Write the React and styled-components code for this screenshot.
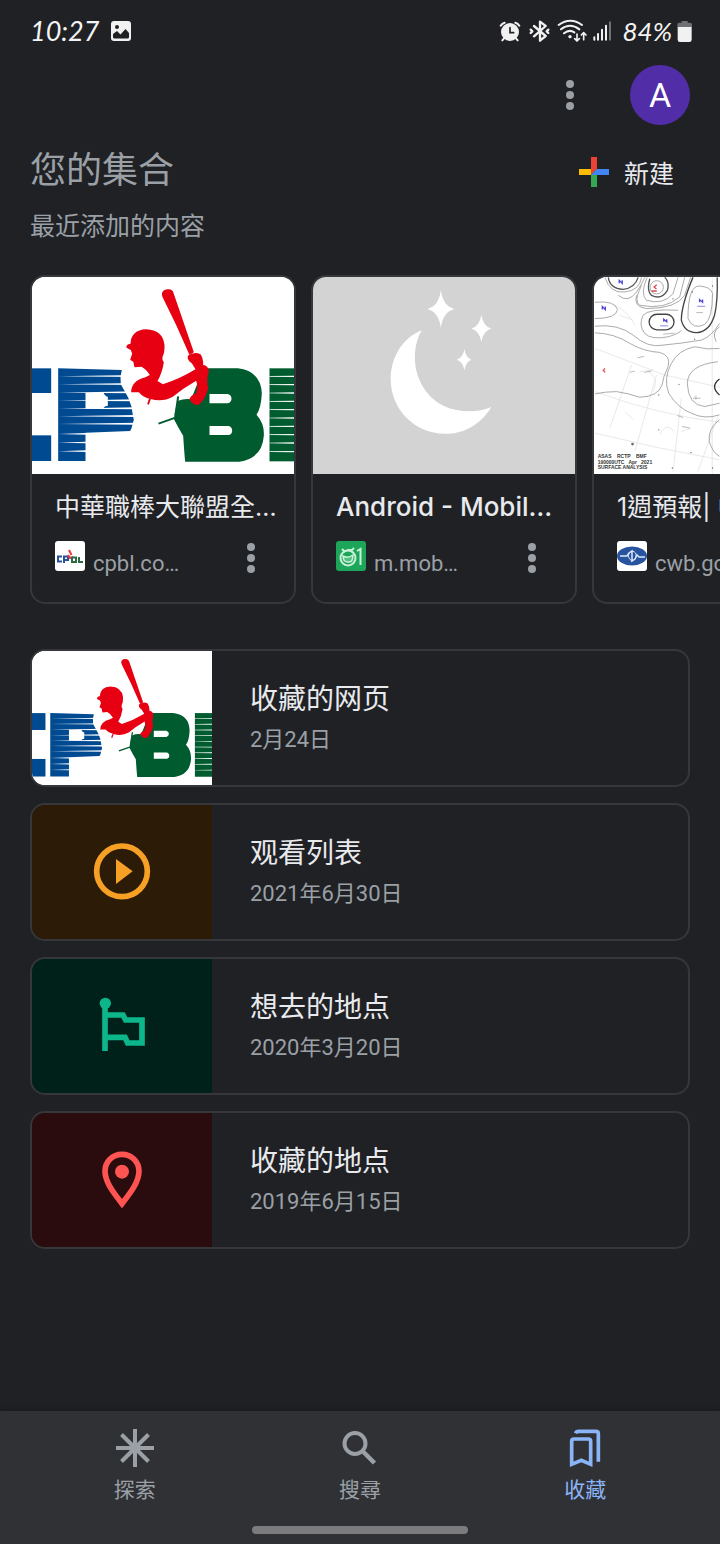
import React from "react";
import styled, { createGlobalStyle } from "styled-components";

const colors = {
  page: "#202125",
  nav: "#303135",
  line: "#35373a",
  muted: "#9aa0a6",
  text: "#e8eaed",
  accent: "#8ab4f8",
};

const GlobalStyle = createGlobalStyle`
  *, *::before, *::after { box-sizing: border-box; }
  body {
    margin: 0;
    background: ${colors.page};
    color: ${colors.text};
    font-family: Roboto, "Noto Sans CJK SC", sans-serif;
  }
  button {
    padding: 0;
    border: 0;
    background: none;
    color: inherit;
    font: inherit;
    cursor: pointer;
  }
  svg { display: block; flex: none; overflow: hidden; }
  h1, h2, h3, p, ul { margin: 0; padding: 0; font-weight: 400; }
  ul { list-style: none; }
`;

const Page = styled.div`
  min-height: 100vh;
  display: flex;
  flex-direction: column;
`;

const StatusBar = styled.div`
  display: flex;
  align-items: center;
  justify-content: space-between;
  height: 62px;
  padding: 0 27px 0 30px;
`;

const StatusGroup = styled.div`
  display: flex;
  align-items: center;
  gap: ${(p) => p.$gap}px;
`;

const StatusText = styled.span`
  font-family: Lato, sans-serif;
  font-style: italic;
  font-size: ${(p) => p.$size}px;
  line-height: 32px;
  color: #f4f4f4;
`;

const TopBar = styled.header`
  display: flex;
  align-items: center;
  justify-content: flex-end;
  gap: 40px;
  padding: 3px 30px 0;
`;

const KebabButton = styled.button`
  display: flex;
  justify-content: center;
  align-items: center;
  width: 40px;
  height: 34px;
  color: ${colors.muted};
`;

const Avatar = styled.button`
  width: 60px;
  height: 60px;
  border-radius: 50%;
  background: #512da8;
  color: #fff;
  font-size: 34px;
  line-height: 60px;
`;

const Main = styled.main`
  flex: 1;
`;

const SectionHead = styled.div`
  display: flex;
  align-items: flex-start;
  justify-content: space-between;
  padding: 20px 46px 0 30px;
`;

const Heading = styled.h1`
  font-size: 36px;
  line-height: 52px;
  color: ${colors.muted};
`;

const Subheading = styled.h2`
  padding: 10px 30px 0;
  font-size: 25px;
  line-height: 36px;
  color: ${colors.muted};
`;

const NewButton = styled.button`
  display: flex;
  align-items: center;
  gap: 15px;
  height: 54px;
  font-size: 25px;
`;

const Carousel = styled.ul`
  display: flex;
  gap: 15px;
  margin-top: 30px;
  padding: 0 30px;
  overflow-x: auto;
  scrollbar-width: none;
`;

const Card = styled.li`
  flex: none;
  width: 266px;
  border: 2px solid ${colors.line};
  border-radius: 15px;
  overflow: hidden;
`;

const CardImage = styled.div`
  height: 197px;
  background: ${(p) => p.$bg};
`;

const CardBody = styled.div`
  padding: 15px 23px 23px;
`;

const CardTitle = styled.h3`
  font-family: Inter, "Noto Sans CJK TC", sans-serif;
  font-size: ${(p) => (p.$latin ? 26 : 25)}px;
  font-weight: ${(p) => (p.$latin ? 500 : 400)};
  line-height: 36px;
  white-space: nowrap;
`;

const CardSource = styled.div`
  display: flex;
  align-items: flex-start;
  margin-top: 16px;
`;

const SourceName = styled.span`
  flex: 1;
  padding: 8px 0 0 8px;
  font-size: 22px;
  line-height: 30px;
  white-space: nowrap;
  color: ${colors.muted};
`;

const CollectionList = styled.ul`
  display: flex;
  flex-direction: column;
  gap: 16px;
  padding: 45px 30px 30px;
`;

const CollectionButton = styled.button`
  display: flex;
  width: 100%;
  height: 138px;
  border: 2px solid ${colors.line};
  border-radius: 15px;
  overflow: hidden;
  text-align: left;
`;

const Tile = styled.span`
  display: flex;
  align-items: center;
  justify-content: center;
  width: 180px;
  height: 100%;
  background: ${(p) => p.$bg};
`;

const CollectionText = styled.span`
  display: flex;
  flex-direction: column;
  padding: 29px 0 0 38px;
`;

const CollectionName = styled.span`
  font-size: 28px;
  line-height: 40px;
`;

const CollectionDate = styled.span`
  font-size: 22px;
  line-height: 40px;
  color: ${colors.muted};
`;

const BottomNav = styled.nav`
  padding: 17px 22px 10px;
  background: ${colors.nav};
  box-shadow: 0 -2px 8px rgba(0, 0, 0, 0.2);
`;

const NavItems = styled.div`
  display: flex;
`;

const NavItem = styled.button`
  flex: 1;
  display: flex;
  flex-direction: column;
  align-items: center;
  gap: 8px;
  font-family: Roboto, "Noto Sans CJK TC", sans-serif;
  font-size: 21px;
  line-height: 28px;
  color: ${(p) => (p.$active ? colors.accent : colors.muted)};
`;

const HomeIndicator = styled.div`
  width: 32%;
  height: 8px;
  margin: 22px auto 0;
  border-radius: 4px;
  background: #7c7c7f;
`;

const PhotoIcon = () => (
  <svg width="20" height="20" viewBox="0 0 20 20">
    <rect width="20" height="20" rx="3" fill="#f1f1f1" />
    <circle cx="6" cy="6" r="2" fill={colors.page} />
    <path d="M2 13 L6 10 L9.5 13.5 L14.5 8 L18 12 V16 Q18 17.5 16.5 17.5 H3.5 Q2 17.5 2 16Z" fill={colors.page} />
  </svg>
);

const AlarmIcon = () => (
  <svg width="23" height="22" viewBox="60 60 69 66" fill="none" stroke="#f1f1f1" strokeWidth="6" strokeLinecap="round">
    <circle cx="93" cy="96" r="27" fill="#f1f1f1" stroke="none" />
    <path d="M65 77 Q69 70 77 68 M109 68 Q117 70 121 77 M75 115 L70 121 M111 115 L116 121" />
    <path d="M93 83 V98 H104" stroke={colors.page} strokeWidth="5" />
  </svg>
);

const BluetoothIcon = () => (
  <svg width="22" height="22" viewBox="147 60 66 66" fill="none" stroke="#f1f1f1" strokeWidth="7" strokeLinecap="round" strokeLinejoin="round">
    <path d="M165 78 L200 108 L183 122 V65 L200 78 L165 109" />
    <path d="M155 89 L160 94 L155 99 M208 89 L203 94 L208 99" />
  </svg>
);

const WifiIcon = () => (
  <svg width="31" height="24" viewBox="231 57 93 72" fill="none" stroke="#f1f1f1" strokeWidth="6" strokeLinecap="round" strokeLinejoin="round">
    <path d="M239 75 Q274 50 309 75 M246 88 Q273 67 301 88 M255 100 Q271 87 286 97" />
    <circle cx="273" cy="110" r="5" fill="#f1f1f1" stroke="none" />
    <path d="M294 102 V122 M287 116 L294 123 L301 116 M314 119 V99 M307 105 L314 98 L321 105" strokeWidth="5" />
  </svg>
);

const SignalIcon = () => (
  <svg width="19" height="22" viewBox="342 60 57 66" fill="none" stroke="#f1f1f1" strokeWidth="6" strokeLinecap="round">
    <path d="M346 112 V119 M357 102 V119 M369 89 V119 M381 77 V119" />
    <path d="M393 67 V119" stroke="#707174" />
  </svg>
);

const BatteryIcon = () => (
  <svg width="16" height="22" viewBox="591 60 48 66">
    <path d="M605 63 H623 V68 H631 Q636 68 636 73 V82 H592 V73 Q592 68 597 68 H605Z" fill="#6f7073" />
    <path d="M593 81 H635 V119 Q635 126 628 126 H600 Q593 126 593 119Z" fill="#f1f1f1" />
  </svg>
);

const KebabIcon = () => (
  <svg width="8" height="32" viewBox="0 0 8 32" fill="currentColor">
    <circle cx="4" cy="5" r="4" />
    <circle cx="4" cy="16" r="4" />
    <circle cx="4" cy="27" r="4" />
  </svg>
);

const PlusIcon = () => (
  <svg width="30" height="30" viewBox="0 0 30 30">
    <path d="M12 0 H18 V12 L12 18Z" fill="#ea4335" />
    <path d="M0 12 H12 V18 H0Z" fill="#fbbc04" />
    <path d="M12 18 L18 12 V30 H12Z" fill="#34a853" />
    <path d="M18 12 H30 V18 H12Z" fill="#4285f4" />
  </svg>
);

const pStripes = [334, 358, 383, 407, 431, 454, 477];
const footStripes = [507, 533, 559];
const lStripes = [334, 359, 384, 409, 434, 459, 484, 509, 534, 560];

const LeagueLogo = () => (
  <svg width="100%" height="100%" viewBox="36 36 789 591" preserveAspectRatio="xMidYMid slice">
    <rect x="30" y="30" width="800" height="600" fill="#fff" />
    <g fill="#004a91">
      <rect x="30" y="310" width="65" height="74" />
      <rect x="30" y="511" width="65" height="77" />
      <path d="M116 310 L307 315 L303 336 L304 358 L314 376 L327 400 L336 425 L340 450 L343 464 L336 490 L332 498 L198 503 V588 H116Z" />
    </g>
    <path d="M198 383 H252 Q257 394 265 395 V422 Q255 422 251 431 H198Z" fill="#fff" />
    <g fill="#fff">
      {pStripes.map((y) => (
        <path key={y} d={`M116 ${y} L350 ${y - 4} V${y + 2}Z`} />
      ))}
      {footStripes.map((y) => (
        <path key={y} d={`M116 ${y} L200 ${y - 3} V${y + 2}Z`} />
      ))}
    </g>
    <path
      d="M476 407 Q495 400 515 403 L552 310 H655 Q724 318 727 385 Q725 430 711 449 Q735 475 733 512 Q728 580 660 590 H497 Q494 560 491 512 Q475 486 463 462 Q468 425 476 407Z"
      fill="#005c2e"
    />
    <path d="M417 476 L468 458 M476 394 L468 450" stroke="#005c2e" strokeWidth="6" />
    <g fill="#fff">
      <path d="M570 387 H625 Q636 391 636 401 Q636 411 625 415 H570Z" />
      <path d="M570 483 H628 Q638 487 638 497 Q638 507 628 510 H570Z" />
    </g>
    <rect x="750" y="310" width="80" height="279" fill="#005c2e" />
    <g fill="#fff">
      {lStripes.map((y) => (
        <path key={y} d={`M750 ${y - 1} L830 ${y - 2} V${y + 2} L750 ${y + 1}Z`} />
      ))}
    </g>
    <g fill="#e60012">
      <path d="M427 88 Q428 74 444 73 Q459 71 462 84 L484 148 L523 262 L510 270 L470 180 L429 96Z" />
      <path d="M333 236 Q335 195 380 193 Q430 195 435 240 Q436 262 429 276 Q427 285 433 292 Q428 325 414 348 L430 358 Q480 342 528 313 L517 295 Q502 285 505 272 Q525 258 543 268 Q552 282 551 300 Q566 302 568 318 Q560 345 566 370 Q558 403 537 420 Q517 420 510 402 Q515 390 530 385 Q536 365 530 347 Q490 370 460 395 Q430 412 393 402 Q370 397 358 382 L335 382 Q335 348 378 337 L391 330 Q380 312 366 305 L345 307 Q342 298 342 291 L332 284 L338 266 L334 255 L321 248 Q319 238 333 236Z" />
      <path d="M389 400 L394 403 L388 419 L383 417Z" />
    </g>
  </svg>
);

const MoonPicture = () => (
  <svg width="100%" height="100%" viewBox="24 36 789 591" fill="#fff">
    <path d="M352 195 C295 216 258 276 258 343 C258 434 331 507 421 507 C480 507 530 478 561 426 C525 443 465 445 418 423 C360 395 327 331 331 265 C333 237 340 213 352 195Z" />
    <path d="M409 74 Q415 123 450 131 Q415 140 409 188 Q403 140 368 131 Q403 123 409 74Z" />
    <path d="M531 149 Q537 184 561 190 Q537 197 531 230 Q525 197 501 190 Q525 184 531 149Z" />
    <path d="M480 252 Q484 278 501 284 Q484 290 480 316 Q476 290 457 284 Q476 278 480 252Z" />
  </svg>
);

const MapText = styled.text`
  font-family: "Liberation Sans", sans-serif;
  font-size: 15px;
  font-weight: 700;
  fill: #333;
  white-space: pre;
`;

const WeatherMap = () => (
  <svg width="100%" height="100%" viewBox="27 36 789 591" fill="none" stroke="#999" strokeWidth="2.5">
    <rect x="20" y="30" width="800" height="600" fill="#fff" stroke="none" />
    <g stroke="#dedede" strokeWidth="2">
      <path d="M30 380 Q220 450 405 472 M30 505 Q220 552 405 585 M140 300 L75 490 M215 330 L150 560 M290 400 L265 620 M30 250 L240 330 L420 370 M383 40 V627 M400 455 L340 620" />
      <path d="M90 120 Q130 140 150 180 M105 150 L145 165 M190 320 Q225 340 205 380 M225 510 Q240 470 270 500 M120 440 L145 465 M165 320 L205 315 M290 500 L320 490" />
    </g>
    <path d="M60 36 Q75 85 120 80 Q165 75 170 36 M100 90 Q130 115 155 80 Q170 60 180 36" />
    <path d="M70 36 Q75 70 115 72 Q150 68 160 36" stroke="#555" strokeWidth="4" />
    <path d="M30 111 Q90 105 98 133 Q94 160 30 160" />
    <path d="M195 40 Q185 75 200 90 Q230 105 248 75 Q255 50 240 36" stroke="#555" strokeWidth="4" />
    <path d="M187 36 Q165 85 185 105 Q235 120 265 85 L280 36 M170 60 Q145 110 165 120 Q240 135 285 95 L300 36 M155 90 Q145 125 185 130 Q275 130 300 90 L318 36" />
    <circle cx="216" cy="66" r="20" />
    <rect x="193" y="147" width="75" height="47" rx="24" stroke="#444" strokeWidth="4" />
    <path d="M280 135 Q190 130 175 150 Q160 180 180 205 Q200 225 250 215 Q285 205 290 195" />
    <path d="M325 36 Q290 120 290 165 Q300 205 340 202 Q375 198 390 150 Q400 110 398 36" stroke="#444" strokeWidth="4" />
    <path d="M310 160 Q310 60 345 62 Q380 65 384 85 Q384 160 360 178 Q325 195 310 160" />
    <path d="M30 183 Q100 175 145 210 Q190 250 235 240 Q290 235 350 225 Q380 215 405 175 M30 203 Q90 205 135 235 Q180 260 225 262 Q260 272 250 305 Q235 335 232 360 Q220 395 165 397 Q130 385 95 380 Q60 380 30 387" />
    <path d="M330 245 Q280 255 260 295 Q235 340 252 385 Q280 430 320 445 Q360 465 405 450 M330 245 Q370 255 405 250 M400 290 Q310 300 308 355 Q310 420 360 425 L405 415 M405 185 Q380 200 395 230 M405 465 Q370 490 374 530 Q385 565 405 575" />
    <path d="M405 342 Q375 365 405 390" stroke="#333" strokeWidth="4" />
    <g stroke="#5248d6" strokeWidth="4">
      <path d="M103 54 V45 L112 54 V45 M52 133 V124 L61 133 V124 M237 170 V162 L246 170 V162 M345 111 V103 L354 111 V103" />
      <path d="M226 182 H250 M338 123 H362" strokeWidth="2" />
    </g>
    <path d="M216 58 L208 65 L215 71 M60 310 L55 316 L61 322 M200 77 H216" stroke="#dc4a50" strokeWidth="4" />
    <g fill="#666" stroke="none">
      <circle cx="265" cy="101" r="2" />
      <circle cx="384" cy="62" r="2" />
      <circle cx="323" cy="80" r="2" />
      <circle cx="143" cy="538" r="4" />
      <circle cx="222" cy="495" r="2" />
      <circle cx="319" cy="564" r="2" />
      <circle cx="222" cy="390" r="2" />
      <circle cx="283" cy="358" r="2" />
      <circle cx="330" cy="222" r="2" />
      <circle cx="263" cy="610" r="2" />
      <circle cx="384" cy="610" r="2" />
    </g>
    <g stroke="#999" strokeWidth="2">
      <path d="M158 278 L178 274 M135 322 L150 318 M178 322 L200 318 M235 207 L270 204 M278 452 L295 458 M292 485 L316 490 M325 400 H348 M334 392 V404 M335 142 H355" />
    </g>
    <g stroke="none">
      <MapText x="38" y="581">ASAS    RCTP    BMF</MapText>
      <MapText x="38" y="597">190000UTC   Apr   2021</MapText>
      <MapText x="38" y="613">SURFACE ANALYSIS</MapText>
    </g>
  </svg>
);

const LeagueFavicon = () => (
  <svg width="30" height="30" viewBox="0 0 30 30" fill="none" strokeWidth="2">
    <rect width="30" height="30" rx="3" fill="#fff" />
    <path d="M7 15.500 H3 V20.500 H7 M9 22 V15.500 H13 V19 H9" stroke="#27539b" />
    <path d="M14 9 L16.500 14 M13 14 L15 17 L18 16" stroke="#e5383f" />
    <path d="M17 16 V21 H21 V16.500 H17 M24 16 V21 H28" stroke="#2a6b45" />
  </svg>
);

const ForumFavicon = () => (
  <svg width="30" height="30" viewBox="0 0 30 30" fill="none" stroke="#c9f0d6" strokeWidth="2">
    <rect width="30" height="30" rx="3" fill="#1da65a" stroke="none" />
    <circle cx="12" cy="17" r="7.500" />
    <path d="M7 15 Q12 18 17 14 Q17 22 12 21 Q7 21 7 15Z" fill="#4fbf80" strokeWidth="1.500" />
    <path d="M6 8 L9 11 M11 9 H16 L18 7 M21 10 L24.500 8 V24" />
  </svg>
);

const WeatherFavicon = () => (
  <svg width="30" height="30" viewBox="0 0 30 30">
    <rect width="30" height="30" rx="3" fill="#fff" />
    <ellipse cx="15" cy="15" rx="15" ry="9.500" fill="#28549f" />
    <path d="M3 15 H10 L12 12 L15 10 V20 L18 18 L20 14 L22 16 H28" fill="none" stroke="#dce8ff" strokeWidth="1.500" />
    <path d="M12 12 Q10 17 15 20 M15 10 Q20 11 19 16" fill="none" stroke="#dce8ff" />
  </svg>
);

const PlayIcon = () => (
  <svg width="60" height="60" viewBox="216 606 180 180">
    <circle cx="306" cy="694" r="76" fill="none" stroke="#f6a025" strokeWidth="17" />
    <path d="M288 657 L338 694 L288 732Z" fill="#f6a025" />
  </svg>
);

const FlagIcon = () => (
  <svg width="60" height="60" viewBox="216 135 180 180" fill="none" stroke="#0cb58a" strokeWidth="17">
    <circle cx="256" cy="157" r="17" fill="#0cb58a" stroke="none" />
    <path d="M255 157 V300 M255 192 H309 L317 207 H366 V276 H323 L315 259 H255" />
  </svg>
);

const PinIcon = () => (
  <svg width="60" height="60" viewBox="216 597 180 180">
    <path
      d="M306 610 C277 610 255 632 255 661 C255 696 287 733 306 758 C325 733 357 696 357 661 C357 632 335 610 306 610Z"
      fill="none"
      stroke="#ff5452"
      strokeWidth="17"
    />
    <circle cx="306" cy="662" r="21" fill="#ff5452" />
  </svg>
);

const ExploreIcon = () => (
  <svg width="40" height="40" viewBox="0 0 40 40" stroke="currentColor" strokeWidth="4">
    <path d="M20 1 V39 M1 20 H39 M6.500 6.500 L33.500 33.500 M33.500 6.500 L6.500 33.500" />
  </svg>
);

const SearchIcon = () => (
  <svg width="40" height="40" viewBox="0 0 40 40" fill="none" stroke="currentColor" strokeWidth="4">
    <circle cx="15" cy="15.500" r="10.500" />
    <path d="M22 22.500 L34.500 35" strokeWidth="4.500" />
  </svg>
);

const BookmarksIcon = () => (
  <svg width="40" height="40" viewBox="135 84 120 120" fill="none" stroke="currentColor" strokeWidth="11">
    <path d="M155 193 V124 Q155 117 162 117 H205 Q212 117 212 124 V193 L184 181Z" />
    <path d="M167 100 Q169 94 176 94 H228 Q235 94 235 101 V185" />
  </svg>
);

const recentItems = [
  { title: "中華職棒大聯盟全…", source: "cpbl.co…", bg: "#fff", Picture: LeagueLogo, Favicon: LeagueFavicon },
  { title: "Android - Mobil…", latin: true, source: "m.mob…", bg: "#d3d3d3", Picture: MoonPicture, Favicon: ForumFavicon },
  { title: "1週預報| 中…", source: "cwb.go…", bg: "#fff", Picture: WeatherMap, Favicon: WeatherFavicon },
];

const collections = [
  { name: "收藏的网页", date: "2月24日", bg: "#fff", Icon: LeagueLogo },
  { name: "观看列表", date: "2021年6月30日", bg: "#2c1b06", Icon: PlayIcon },
  { name: "想去的地点", date: "2020年3月20日", bg: "#002119", Icon: FlagIcon },
  { name: "收藏的地点", date: "2019年6月15日", bg: "#2a0c0e", Icon: PinIcon },
];

const navItems = [
  { label: "探索", Icon: ExploreIcon },
  { label: "搜尋", Icon: SearchIcon },
  { label: "收藏", Icon: BookmarksIcon, active: true },
];

export default function App() {
  return (
    <Page>
      <GlobalStyle />
      <StatusBar>
        <StatusGroup $gap={12}>
          <StatusText $size={27}>10:27</StatusText>
          <PhotoIcon />
        </StatusGroup>
        <StatusGroup $gap={10}>
          <StatusGroup $gap={6}>
            <AlarmIcon />
            <BluetoothIcon />
            <WifiIcon />
            <SignalIcon />
          </StatusGroup>
          <StatusGroup $gap={5}>
            <StatusText $size={26}>84%</StatusText>
            <BatteryIcon />
          </StatusGroup>
        </StatusGroup>
      </StatusBar>
      <TopBar>
        <KebabButton aria-label="更多">
          <KebabIcon />
        </KebabButton>
        <Avatar>A</Avatar>
      </TopBar>
      <Main>
        <SectionHead>
          <Heading>您的集合</Heading>
          <NewButton>
            <PlusIcon />
            新建
          </NewButton>
        </SectionHead>
        <Subheading>最近添加的内容</Subheading>
        <Carousel>
          {recentItems.map(({ title, latin, source, bg, Picture, Favicon }) => (
            <Card key={source}>
              <CardImage $bg={bg}>
                <Picture />
              </CardImage>
              <CardBody>
                <CardTitle $latin={latin}>{title}</CardTitle>
                <CardSource>
                  <Favicon />
                  <SourceName>{source}</SourceName>
                  <KebabButton aria-label="更多">
                    <KebabIcon />
                  </KebabButton>
                </CardSource>
              </CardBody>
            </Card>
          ))}
        </Carousel>
        <CollectionList>
          {collections.map(({ name, date, bg, Icon }) => (
            <li key={name}>
              <CollectionButton>
                <Tile $bg={bg}>
                  <Icon />
                </Tile>
                <CollectionText>
                  <CollectionName>{name}</CollectionName>
                  <CollectionDate>{date}</CollectionDate>
                </CollectionText>
              </CollectionButton>
            </li>
          ))}
        </CollectionList>
      </Main>
      <BottomNav>
        <NavItems>
          {navItems.map(({ label, Icon, active }) => (
            <NavItem key={label} $active={active} aria-current={active ? "page" : undefined}>
              <Icon />
              {label}
            </NavItem>
          ))}
        </NavItems>
        <HomeIndicator />
      </BottomNav>
    </Page>
  );
}
